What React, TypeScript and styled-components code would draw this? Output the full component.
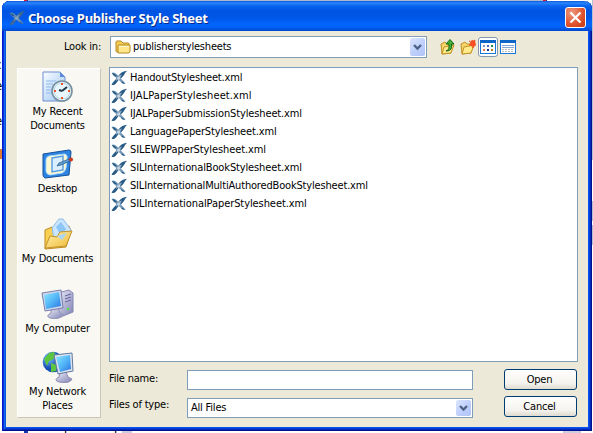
import React from "react";
import styled, { createGlobalStyle } from "styled-components";

const Global = createGlobalStyle`
  * { box-sizing: border-box; }
  html, body { margin: 0; overflow: hidden; background: #fff; }
  body { font: 11px/14px "DejaVu Sans Condensed", "DejaVu Sans", sans-serif; font-stretch: condensed; color: #000; }
  svg { display: block; flex: none; }
  button { font: inherit; color: inherit; padding: 0; }
`;
const Desktop = styled.div`
  position: relative; width: 593px; height: 433px; overflow: hidden; background: #fff; padding: 1px 0 0 2px;
`;
const Behind = styled.svg` position: absolute; left: 0; top: 0; `;
const UnderText = styled.div<{ $x: number; $y: number }>`
  position: absolute; left: ${p => p.$x}px; top: ${p => p.$y}px; font-size: 13px; line-height: 15px; white-space: nowrap;
`;
const Dialog = styled.div`
  position: relative; width: 590px; height: 430px; display: flex; flex-direction: column;
  border-radius: 8px 8px 0 0; overflow: hidden; background: #ece9d8;
  box-shadow: inset 1px 0 #0019cf, inset -1px -1px #00138c, inset 2px 0 #0831d9, inset -2px -2px #0527b9, inset 3px 0 #166aee, inset -3px -3px #0441d8, inset 4px 0 #0855dd, inset -4px -4px #0a50ee;
`;
const TitleBar = styled.div`
  height: 30px; flex: none; display: flex; align-items: center; padding: 3px 6px 0 7px;
  background: linear-gradient(#0e58d9 0, #2a86fb 2px, #0a64ee 5px, #0054e3 10px, #0057e7 17px, #0265fd 23px, #0061f8 26px, #0047cd 30px);
`;
const Title = styled.h1`
  flex: 1; margin: 0 0 0 3px; font: bold 13px/18px "Noto Sans", sans-serif; color: #fff; white-space: nowrap;
  letter-spacing: -0.27px; text-shadow: 1px 1px #0a2a8a;
`;
const Close = styled.button`
  width: 21px; height: 21px; margin-top: -1px; display: grid; place-items: center; border: 1px solid #fff; border-radius: 3px;
  background: radial-gradient(circle at 30% 25%, #ec9a80, #e0512c 60%, #c23a12);
`;
const Content = styled.div` flex: 1; display: flex; flex-direction: column; padding: 5px 11px 10px 15px; `;
const LookRow = styled.div` height: 22px; display: flex; align-items: center; `;
const Text = styled.span<{ $track?: number }>` white-space: nowrap; letter-spacing: ${p => p.$track ?? -0.2}px; `;
const LookLabel = styled.div` width: 93px; padding-left: 47px; `;
const Combo = styled.div<{ $w: number; $h: number; $pad: number }>`
  width: ${p => p.$w}px; height: ${p => p.$h}px; flex: none; display: flex; align-items: center; gap: 2px;
  padding: 0 1px 0 ${p => p.$pad}px; border: 1px solid #7f9db9; background: #fff;
`;
const ArrowBox = styled.span<{ $h: number }>`
  margin-left: auto; width: 15px; height: ${p => p.$h}px; display: grid; place-items: center; border-radius: 2px;
  background: linear-gradient(135deg, #dbe5ff, #bccdfb 60%, #aec4f7);
`;
const Tools = styled.div` display: flex; align-items: center; margin-left: 11px; `;
const Tool = styled.span<{ $on?: boolean }>`
  width: 20px; height: 20px; display: grid; place-items: center; border-radius: 3px;
  border: 1px solid ${p => (p.$on ? "#8397ae" : "transparent")}; background: ${p => (p.$on ? "#fff" : "transparent")};
`;
const Main = styled.div` flex: 1; display: flex; margin-top: 9px; `;
const Places = styled.nav`
  width: 84px; height: 350px; margin-top: 1px; flex: none; background: #f9f8f3; border: 1px solid #fff;
  border-right-color: #c9c6b8; border-bottom-color: #c9c6b8; padding-right: 3px;
`;
const Place = styled.div<{ $h: number }>`
  height: ${p => p.$h}px; display: flex; flex-direction: column; align-items: center; padding-top: 2px;
`;
const PlaceText = styled.div` margin-top: 2px; display: flex; flex-direction: column; align-items: center; `;
const Right = styled.div` flex: 1; margin-left: 8px; display: flex; flex-direction: column; `;
const FileList = styled.div`
  width: 469px; height: 295px; border: 1px solid #7f9db9; background: #fff; padding-top: 1px;
`;
const FileRow = styled.div` height: 18px; display: flex; align-items: center; gap: 3px; padding-left: 1px; `;
const Form = styled.div` display: flex; width: 469px; margin-top: 7px; `;
const Labels = styled.div` width: 78px; display: flex; flex-direction: column; gap: 12px; padding-top: 3px; `;
const Fields = styled.div` display: flex; flex-direction: column; gap: 8px; padding-top: 1px; `;
const Buttons = styled.div` margin-left: auto; margin-right: 1px; display: flex; flex-direction: column; gap: 6px; `;
const Button = styled.button`
  width: 73px; height: 21px; border: 1px solid #003c74; border-radius: 3px;
  background: linear-gradient(#fff, #f4f3ee 70%, #dedace); padding-right: 2px;
`;

const Swoosh = ({ light }: { light?: boolean }) => (
  <svg width="16" height="16" viewBox="0 0 16 16" opacity={light ? 0.85 : 1}>
    <path d="M.5 3Q3 1.5 5.5 4L9 7.5L14.5 13.5Q12 14.5 9.5 11.5L6 8.5Q3 7 .5 3Z" fill={light ? "#7e9fb0" : "#7398b8"} />
    <path d="M1 3Q4 3 6 6.5Q3 6.5 1 3ZM11 11.5L14 13.5Q12 14.5 10 12Z" fill="#285981" />
    <path d="M16 .7Q11 1 8 5L5 9Q2 12 .5 14.5Q2.5 16 5 13.5L8 9.5Q11 8 13 5Q14 2.5 16 .7Z" fill={light ? "#466b88" : "#275b86"} />
    <path d="M6 7Q8 4.5 11 4.5Q9.5 8 7 9.5L5 11Q5 9 6 7Z" fill={light ? "#7a9aab" : "#91acc6"} />
    <path d="M6 7.5L9 6.5L9.5 9L7 10Z" fill={light ? "#9bb4b8" : "#c8d5e1"} />
  </svg>
);
const Arrow = () => <svg width="9" height="8" viewBox="0 0 9 8"><path d="M1 2L4.5 5.5L8 2" fill="none" stroke="#4d6185" strokeWidth="2.3" /></svg>;
const Folder = () => (
  <svg width="16" height="14" viewBox="0 0 16 14">
    <path d="M1 2Q1 1 2 1H6L8 3H13Q14 3 14 4V12H2Q1 12 1 11Z" fill="#f3cd55" stroke="#b58a25" />
    <path d="M3 6Q3 5 4 5H15V11Q15 13 13 13H3Z" fill="#ffe68b" stroke="#b58a25" /><path d="M4 6.5H14" stroke="#fff8ce" />
  </svg>
);
const OpenFolder = ({ up }: { up?: boolean }) => (
  <svg width="16" height="16" viewBox="0 0 16 16">
    <path d="M1 5L5 3L7 5H12L11 14L2 15Z" fill="#f6d56c" stroke="#c29124" />
    <path d="M4 8L14 6L11 14L2 15Z" fill="#ffeb8c" stroke="#c29124" />
    {up ? <path d="M6 12Q10 11 8.8 5H6L10 .5L14 5H11.5Q13 12 6 12Z" fill="#45b134" stroke="#17651a" />
      : <path d="M9 2L11 3L12 1L13 2L15 1V4L16 6L14 7L13 9L12 7L9 6L11 4Z" fill="#ff4c23" stroke="#e34916" strokeWidth=".6" />}
  </svg>
);
const ViewIcon = ({ list }: { list?: boolean }) => (
  <svg width="16" height="14" viewBox="0 0 16 14" shapeRendering="crispEdges">
    <rect x=".5" y=".5" width="15" height="13" fill="#fff" stroke="#1976d2" /><rect width="16" height="3" fill="#0b66c8" />
    {list ? <><path d="M2 5.5H14M2 7.5H14" stroke="#86a6d7" /><path d="M2 9.5H14M2 11.5H14" stroke="#b9b9b9" strokeDasharray="2 1" /></>
      : <><path d="M3 5h2v2H3z" fill="#8295bd" /><path d="M7 5h2v2H7z" fill="#426fc6" /><path d="M11 5h2v2h-2z" fill="#238a48" /><path d="M3 9h2v2H3z" fill="#e37958" /><path d="M7 9h2v2H7z" fill="#113a8c" /><path d="M11 9h2v2h-2z" fill="#b87d1b" /></>}
  </svg>
);

const DefsSvg = styled.svg` position: absolute; `;
const Defs = () => (
  <DefsSvg width="0" height="0">
    <defs>
      <linearGradient id="screen" x2="1" y2="1"><stop stopColor="#8de6ff" /><stop offset=".5" stopColor="#54b8f8" /><stop offset="1" stopColor="#2b72df" /></linearGradient>
      <linearGradient id="pale" x2="1" y2="1"><stop stopColor="#f9fcff" /><stop offset="1" stopColor="#9bc5f5" /></linearGradient>
      <linearGradient id="case" x2="1" y2="1"><stop stopColor="#eeeef8" /><stop offset="1" stopColor="#7e80b4" /></linearGradient>
      <linearGradient id="gold" x2="1" y2="1"><stop stopColor="#fff3b2" /><stop offset="1" stopColor="#efb934" /></linearGradient>
      <radialGradient id="globe" cx=".3" cy=".3"><stop stopColor="#81c3ff" /><stop offset="1" stopColor="#174fb5" /></radialGradient>
    </defs>
  </DefsSvg>
);
const Recent = () => (
  <svg width="32" height="32" viewBox="0 0 32 32">
    <path d="M1 1H18L23 6V30H1Z" fill="url(#pale)" stroke="#6e8fd2" /><path d="M18 1V6H23" fill="#5b8cd9" />
    <path d="M4 10H14M4 13H11M4 16H9M4 19H9M4 22H10" stroke="#91b9ec" />
    <circle cx="20" cy="20" r="10" fill="#e8f7fd" stroke="#77909f" strokeWidth="1.6" /><circle cx="20" cy="20" r="8" fill="none" stroke="#b8d6e4" />
    <path d="M20 20L25 16M20 20L17 19" stroke="#203a49" strokeWidth="2" /><path d="M20 12V14M20 26V28M12 20H14M26 20H28" stroke="#f0512e" strokeWidth="2" />
  </svg>
);
const DesktopIcon = () => (
  <svg width="32" height="32" viewBox="0 0 32 32">
    <path d="M1 6L27 2Q29 2 29 4L27 27L3 30Q1 29 1 27Z" fill="#2d83df" stroke="#14529c" />
    <path d="M7 8L23 6Q26 7 25 11L24 20Q23 24 20 25L8 27Q4 26 4 23V12Q4 9 7 8Z" fill="#fff8d3" stroke="#a7dcff" />
    <path d="M10 10L21 8V22L10 24Z" fill="#d9efff" stroke="#529be1" strokeWidth="1.4" />
    <path d="M15 18L17 15L27 11L28 13L19 17Z" fill="#5d9ed5" stroke="#28577f" strokeWidth=".7" /><circle cx="29" cy="11.5" r="2" fill="#d13a1d" />
  </svg>
);
const Docs = () => (
  <svg width="32" height="32" viewBox="0 0 32 32">
    <path d="M3 12L10 9L13 13L27 8L29 13L24 29L3 31Z" fill="#f9cf52" stroke="#bd8a20" />
    <path d="M10 10L17 1L21 1L29 12L20 24L12 21Z" fill="#c9e5ff" stroke="#8bbce9" /><path d="M14 9L19 4L24 11L19 18Z" fill="#72b8f4" opacity=".7" />
    <path d="M3 30L8 18L15 19L18 14L30 13L24 28Z" fill="url(#gold)" stroke="#c4932b" /><path d="M15 18L25 15L20 22Z" fill="#a9d5f6" />
  </svg>
);
const Computer = () => (
  <svg width="34" height="32" viewBox="0 0 34 32">
    <path d="M17 5L28 2L32 5V24L22 28L17 24Z" fill="url(#case)" stroke="#8586b5" /><path d="M24 8L30 6M24 11L30 9M24 14L30 12" stroke="#6366a0" />
    <circle cx="27" cy="21" r="1.3" fill="#5ce23c" /><path d="M10 22L17 20L19 25L23 27Q18 32 9 30Q4 28 10 25Z" fill="url(#case)" stroke="#9193b8" />
    <path d="M1 5L20 2L22 20L4 23Z" fill="#d1d5e9" stroke="#777fac" /><path d="M3 7L18 4L20 18L5 21Z" fill="url(#screen)" />
  </svg>
);
const Network = () => (
  <svg width="32" height="32" viewBox="0 0 32 32">
    <circle cx="11" cy="11" r="10.3" fill="url(#globe)" /><path d="M2 8L7 2L12 1L14 5L10 9L7 10L5 15ZM9 12L15 14L14 20L9 21Z" fill="#5cc63e" />
    <path d="M18 22L24 21L26 26L30 28Q28 33 17 31Q11 29 17 26Z" fill="url(#case)" stroke="#8e8db4" />
    <path d="M12 4L30 2L31 20L16 23Z" fill="#dce2f0" stroke="#61799f" /><path d="M14 6L28 4L29 18L18 21Z" fill="url(#screen)" />
  </svg>
);

const files: [string, number][] = [
  ["HandoutStylesheet.xml", -0.18], ["IJALPaperStylesheet.xml", 0.08], ["IJALPaperSubmissionStylesheet.xml", -0.13],
  ["LanguagePaperStylesheet.xml", -0.15], ["SILEWPPaperStylesheet.xml", -0.1], ["SILInternationalBookStylesheet.xml", -0.13],
  ["SILInternationalMultiAuthoredBookStylesheet.xml", -0.17], ["SILInternationalPaperStylesheet.xml", -0.08],
];
const places = [
  { icon: <Recent />, lines: ["My Recent", "Documents"], h: 77 }, { icon: <DesktopIcon />, lines: ["Desktop"], h: 70 },
  { icon: <Docs />, lines: ["My Documents"], h: 70 }, { icon: <Computer />, lines: ["My Computer"], h: 63 }, { icon: <Network />, lines: ["My Network", "Places"], h: 66 },
];
const margin: [string, number][] = [["c", 57], ["e", 78], ["r", 95], ["e", 113]];

export default function App() {
  return (
    <Desktop>
      <Global /><Defs />
      <Behind width="593" height="433">
        <path d="M24 0h3v3h-3zM543 0h3v3h-3z" fill="#e21b2c" /><path d="M27 0h1v3h-1zM546 0h1v3h-1zM24 431h4v2h-4z" fill="#1737b5" />
        <path d="M28 0h515v1H28z" fill="#aab9d1" /><path d="M0 149h2v10H0z" fill="#dc7b32" />
        <path d="M592 0h1v160h-1zM592 201h1v20h-1zM592 225h1v20h-1z" fill="#b5bfd6" />
        <path d="M122 431h10v2h-10zM563 431h18v2h-18z" fill="#c9cddd" />
      </Behind>
      {margin.map(([letter, y]) => <UnderText key={y} $x={-5} $y={y}>{letter}</UnderText>)}
      <UnderText $x={44} $y={428}>or document</UnderText>
      <Dialog>
        <TitleBar><Swoosh light /><Title>Choose Publisher Style Sheet</Title>
          <Close aria-label="Close"><svg width="13" height="13" viewBox="0 0 13 13"><path d="M1.5 1.5L11.5 11.5M11.5 1.5L1.5 11.5" stroke="#fff" strokeWidth="2.2" /></svg></Close>
        </TitleBar>
        <Content>
          <LookRow><LookLabel><Text>Look in:</Text></LookLabel>
            <Combo $w={317} $h={22} $pad={4}><Folder /><Text>publisherstylesheets</Text><ArrowBox $h={18}><Arrow /></ArrowBox></Combo>
            <Tools><Tool><OpenFolder up /></Tool><Tool><OpenFolder /></Tool><Tool $on><ViewIcon /></Tool><Tool><ViewIcon list /></Tool></Tools>
          </LookRow>
          <Main>
            <Places>{places.map(p => <Place key={p.lines[0]} $h={p.h}>{p.icon}<PlaceText>{p.lines.map(l => <Text key={l}>{l}</Text>)}</PlaceText></Place>)}</Places>
            <Right>
              <FileList>{files.map(([name, track]) => <FileRow key={name}><Swoosh /><Text $track={track}>{name}</Text></FileRow>)}</FileList>
              <Form>
                <Labels><Text>File name:</Text><Text>Files of type:</Text></Labels>
                <Fields>
                  <Combo $w={286} $h={20} $pad={3} />
                  <Combo $w={286} $h={20} $pad={3}><Text>All Files</Text><ArrowBox $h={16}><Arrow /></ArrowBox></Combo>
                </Fields>
                <Buttons><Button><Text>Open</Text></Button><Button><Text>Cancel</Text></Button></Buttons>
              </Form>
            </Right>
          </Main>
        </Content>
      </Dialog>
    </Desktop>
  );
}
